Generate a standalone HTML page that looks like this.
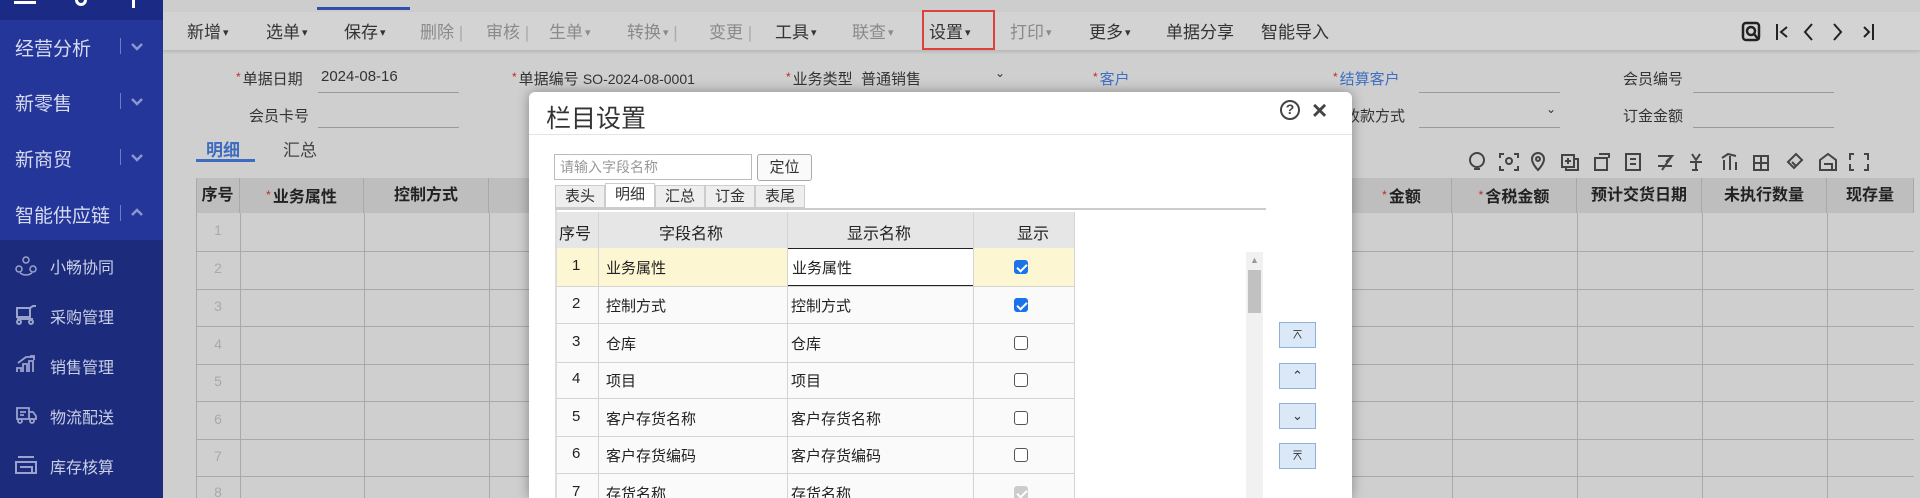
<!DOCTYPE html>
<html><head><meta charset="utf-8"><style>
*{margin:0;padding:0;box-sizing:border-box}
html{width:1920px;height:498px;overflow:hidden}
body{width:1920px;height:498px;overflow:hidden;position:relative;background:#cfcfcf;font-family:"Liberation Sans","Noto Sans CJK SC",sans-serif;color:#333}
.a{position:absolute;white-space:nowrap}
#sb{position:absolute;left:0;top:0;width:163px;height:498px;background:#25369a}
.sbm{position:absolute;left:15px;font-size:19px;color:#d6dbf0}
.sbc{position:absolute;left:120px;width:1px;height:16px;background:#6f7cc0}
.sub{position:absolute;left:50px;font-size:16px;color:#c9cfe6}
.tb{position:absolute;top:18px;font-size:17px;color:#333}
.dis{color:#8a8a8a}
.chev{font-size:11px;margin-left:2px;vertical-align:2px}
.lbl{position:absolute;font-size:15px;color:#333}
.req{color:#c0282a;font-size:12px;vertical-align:3px;margin-right:2px}
.blue{color:#3f6fc4}
.ul{position:absolute;height:1px;background:#9a9a9a}
.th{position:absolute;top:178px;height:35px;background:#bebebe;border-right:1px solid #a8a8a8;font-weight:bold;font-size:16px;line-height:35px;text-align:center;color:#222}
.hl{position:absolute;height:1px;background:#a9a9a9}
.vl{position:absolute;width:1px;background:#a9a9a9}
.rn{position:absolute;left:196px;width:44px;text-align:center;color:#a9a9a9;font-size:14px}
#dlg{position:absolute;left:529px;top:92px;width:823px;height:406px;overflow:hidden;background:#fff;border-radius:6px 6px 0 0;box-shadow:0 0 12px rgba(0,0,0,.35)}
.gc{position:absolute;font-size:15px;color:#222}
.cb{position:absolute;width:14px;height:14px;border:1px solid #555;border-radius:3px;background:#fff}
.cbon{background:#1a73e8;border-color:#1a73e8}
.cbon:after{content:"";position:absolute;left:4px;top:1px;width:4px;height:8px;border:solid #fff;border-width:0 2px 2px 0;transform:rotate(45deg)}
.mb{position:absolute;left:750px;width:37px;height:26px;background:#dbe8f7;border:1px solid #8fb0d8;font-size:13px;text-align:center;line-height:24px;color:#333}
.tab{position:absolute;top:93px;height:23px;border:1px solid #ccc;background:#eee;font-size:15px;text-align:center;line-height:21px}
</style></head><body>
<!-- sidebar -->
<div id="sb">
<div style="position:absolute;left:0;top:0;width:163px;height:20px;background:#1b2a85"></div>
<div class="a" style="left:14px;top:1px;width:22px;height:3px;background:#fff"></div>
<div class="a" style="left:75px;top:-6px;width:12px;height:12px;border:3px solid #fff;border-radius:50%"></div>
<div class="a" style="left:132px;top:0;width:3px;height:8px;background:#fff"></div>
<div class="sbm" style="top:34px">经营分析</div><div class="sbc" style="top:38px"></div>
<div class="sbm" style="top:89px">新零售</div><div class="sbc" style="top:93px"></div>
<div class="sbm" style="top:145px">新商贸</div><div class="sbc" style="top:149px"></div>
<div class="sbm" style="top:201px">智能供应链</div><div class="sbc" style="top:205px"></div>
<svg class="a" style="left:130px;top:40px" width="14" height="180" viewBox="0 0 14 180" fill="none" stroke="#8a96d0" stroke-width="2.5"><path d="M2 4l5 5 5-5M2 59l5 5 5-5M2 115l5 5 5-5M2 175l5-5 5 5"/></svg>
<div style="position:absolute;left:0;top:240px;width:163px;height:258px;background:#1d2b7c"></div>
<svg class="a" style="left:15px;top:256px" width="22" height="20" viewBox="0 0 22 20" fill="none" stroke="#9aa3cc" stroke-width="1.5"><circle cx="11" cy="4" r="3"/><circle cx="4" cy="13" r="3"/><circle cx="18" cy="13" r="3"/><path d="M5 17q6 4 12 0"/></svg>
<div class="sub" style="top:254px">小畅协同</div>
<svg class="a" style="left:15px;top:305px" width="22" height="20" viewBox="0 0 22 20" fill="none" stroke="#9aa3cc" stroke-width="2"><path d="M2 3h13v9H2zM15 3l3-2h3M2 14h16"/><circle cx="4" cy="17" r="2"/><circle cx="16" cy="17" r="2"/></svg>
<div class="sub" style="top:304px">采购管理</div>
<svg class="a" style="left:15px;top:354px" width="22" height="20" viewBox="0 0 22 20" fill="none" stroke="#9aa3cc" stroke-width="1.8"><path d="M2 18v-4h4v4M8 18V10h4v8M14 18V7h4v11M3 9l8-6 8 0M15 2h4v4"/></svg>
<div class="sub" style="top:354px">销售管理</div>
<svg class="a" style="left:15px;top:405px" width="22" height="20" viewBox="0 0 22 20" fill="none" stroke="#9aa3cc" stroke-width="1.8"><path d="M2 3h12v11H2zM14 7h4l3 4v3h-7M5 7h6M5 10h4"/><circle cx="5" cy="16" r="2"/><circle cx="17" cy="16" r="2"/></svg>
<div class="sub" style="top:404px">物流配送</div>
<svg class="a" style="left:15px;top:455px" width="22" height="20" viewBox="0 0 22 20" fill="none" stroke="#9aa3cc" stroke-width="2"><path d="M3 2h16M1 7h20v11H1zM5 12h12v6"/></svg>
<div class="sub" style="top:454px">库存核算</div>
</div>
<!-- top strip -->
<div class="a" style="left:163px;top:0;width:1757px;height:12px;background:#cdcdcd"></div>
<div class="a" style="left:317px;top:7px;width:93px;height:3px;background:#2f4fa8"></div>
<!-- toolbar -->
<div class="a" style="left:163px;top:12px;width:1757px;height:38px;background:#d3d3d3;box-shadow:0 2px 3px rgba(0,0,0,.12)"></div>
<div class="tb" style="left:187px">新增<span class="chev">▾</span></div>
<div class="tb" style="left:266px">选单<span class="chev">▾</span></div>
<div class="tb" style="left:344px">保存<span class="chev">▾</span></div>
<div class="tb dis" style="left:420px">删除 <span style="color:#aaa">|</span></div>
<div class="tb dis" style="left:486px">审核 <span style="color:#aaa">|</span></div>
<div class="tb dis" style="left:549px">生单<span class="chev">▾</span></div>
<div class="tb dis" style="left:627px">转换<span class="chev">▾</span> <span style="color:#aaa">|</span></div>
<div class="tb dis" style="left:709px">变更 <span style="color:#aaa">|</span></div>
<div class="tb" style="left:775px">工具<span class="chev">▾</span></div>
<div class="tb dis" style="left:852px">联查<span class="chev">▾</span></div>
<div class="tb" style="left:929px">设置<span class="chev">▾</span></div>
<div class="a" style="left:922px;top:10px;width:73px;height:40px;border:2px solid #e0403c"></div>
<div class="tb dis" style="left:1010px">打印<span class="chev">▾</span></div>
<div class="tb" style="left:1089px">更多<span class="chev">▾</span></div>
<div class="tb" style="left:1166px">单据分享</div>
<div class="tb" style="left:1261px">智能导入</div>
<svg class="a" style="left:1740px;top:20px" width="150" height="24" viewBox="0 0 150 24" fill="none" stroke="#222" stroke-width="2.5"><rect x="3" y="3" width="16" height="17" rx="3"/><circle cx="11" cy="11" r="4"/><path d="M14 14l5 6"/><path d="M37 4v16M47 7l-6 5 6 5" stroke-width="2"/><path d="M72 4l-7 8 7 8" stroke-width="2"/><path d="M94 4l7 8-7 8" stroke-width="2"/><path d="M124 7l5 5-5 5M133 4v16" stroke-width="2"/></svg>
<!-- form -->
<div class="lbl" style="left:236px;top:68px"><span class="req">*</span>单据日期</div>
<div class="lbl" style="left:321px;top:68px">2024-08-16</div>
<div class="ul" style="left:318px;top:92px;width:141px"></div>
<div class="lbl" style="left:249px;top:105px">会员卡号</div>
<div class="ul" style="left:318px;top:127px;width:141px"></div>
<div class="lbl" style="left:512px;top:68px"><span class="req">*</span>单据编号 <span style="font-size:14px">SO-2024-08-0001</span></div>
<div class="ul" style="left:596px;top:92px;width:141px"></div>
<div class="lbl" style="left:786px;top:68px"><span class="req">*</span>业务类型&nbsp; 普通销售</div>
<div class="lbl" style="left:995px;top:66px;font-size:12px">⌄</div>
<div class="lbl blue" style="left:1093px;top:68px"><span class="req">*</span>客户</div>
<div class="lbl blue" style="left:1333px;top:68px"><span class="req">*</span>结算客户</div>
<div class="ul" style="left:1419px;top:92px;width:141px"></div>
<div class="lbl" style="left:1345px;top:105px">收款方式</div>
<div class="lbl" style="left:1546px;top:102px;font-size:12px">⌄</div>
<div class="ul" style="left:1419px;top:127px;width:141px"></div>
<div class="lbl" style="left:1623px;top:68px">会员编号</div>
<div class="ul" style="left:1693px;top:92px;width:141px"></div>
<div class="lbl" style="left:1623px;top:105px">订金金额</div>
<div class="ul" style="left:1693px;top:127px;width:141px"></div>
<div class="a" style="left:206px;top:136px;font-size:17px;color:#3d6cc0;font-weight:bold">明细</div>
<div class="a" style="left:283px;top:136px;font-size:17px;color:#444">汇总</div>
<div class="a" style="left:196px;top:159px;width:59px;height:3px;background:#3d6cc0"></div>
<svg class="a" style="left:1466px;top:150px" width="430" height="24" viewBox="0 0 430 24" fill="none" stroke="#444" stroke-width="2">
<circle cx="11" cy="10" r="7"/><path d="M8 19h6"/>
<path d="M38 4h-4v4M48 4h4v4M38 20h-4v-4M48 20h4v-4"/><circle cx="43" cy="11" r="3"/>
<path d="M72 20s-6-6-6-11a6 6 0 0 1 12 0c0 5-6 11-6 11z"/><circle cx="72" cy="9" r="2"/>
<rect x="96" y="5" width="12" height="12"/><path d="M102 8v6M99 11h6M100 17v3h12V9h-4"/>
<rect x="129" y="8" width="12" height="12"/><path d="M133 4h10v4"/>
<rect x="160" y="4" width="14" height="16"/><path d="M164 9h6M164 14h6"/>
<path d="M192 6h14l-6 6M192 16h14M196 20l10-14"/>
<path d="M226 4l4 6 4-6M224 12h12M230 12v8M226 20h6"/>
<path d="M258 20V10M264 20V6M270 20v-8M256 8l6-4 8 2"/>
<rect x="288" y="6" width="14" height="14"/><path d="M295 6v14M288 13h14"/>
<path d="M322 12l8-8 6 6-8 8zM326 12l4 4"/>
<path d="M354 10l8-6 8 6v10h-16zM358 14h8v6"/>
<path d="M388 4h-4v6M398 4h4v6M388 20h-4v-6M398 20h4v-6"/>
</svg>
<!-- table -->
<div class="th" style="left:196px;width:44px">序号</div>
<div class="th" style="left:240px;width:124px"><span class="req" style="font-weight:normal">*</span>业务属性</div>
<div class="th" style="left:364px;width:125px">控制方式</div>
<div class="th" style="left:489px;width:900px"></div>
<div class="th" style="left:1352px;width:100px"><span class="req" style="font-weight:normal">*</span>金额</div>
<div class="th" style="left:1452px;width:125px"><span class="req" style="font-weight:normal">*</span>含税金额</div>
<div class="th" style="left:1577px;width:125px">预计交货日期</div>
<div class="th" style="left:1702px;width:125px">未执行数量</div>
<div class="th" style="left:1827px;width:87px">现存量</div>
<div class="vl" style="left:196px;top:178px;height:320px"></div>
<div class="vl" style="left:240px;top:213px;height:285px"></div>
<div class="vl" style="left:364px;top:213px;height:285px"></div>
<div class="vl" style="left:489px;top:213px;height:285px"></div>
<div class="vl" style="left:1452px;top:213px;height:285px"></div>
<div class="vl" style="left:1577px;top:213px;height:285px"></div>
<div class="vl" style="left:1702px;top:213px;height:285px"></div>
<div class="vl" style="left:1827px;top:213px;height:285px"></div>
<div class="hl" style="left:196px;top:251px;width:1718px"></div>
<div class="hl" style="left:196px;top:289px;width:1718px"></div>
<div class="hl" style="left:196px;top:326px;width:1718px"></div>
<div class="hl" style="left:196px;top:364px;width:1718px"></div>
<div class="hl" style="left:196px;top:401px;width:1718px"></div>
<div class="hl" style="left:196px;top:439px;width:1718px"></div>
<div class="hl" style="left:196px;top:476px;width:1718px"></div>
<div class="rn" style="top:222px">1</div><div class="rn" style="top:260px">2</div><div class="rn" style="top:298px">3</div><div class="rn" style="top:336px">4</div><div class="rn" style="top:373px">5</div><div class="rn" style="top:411px">6</div><div class="rn" style="top:448px">7</div><div class="rn" style="top:484px">8</div>
<!-- dialog -->
<div id="dlg">
<div class="a" style="left:17px;top:7px;font-size:25px;color:#333">栏目设置</div>
<div class="a" style="left:751px;top:8px;width:20px;height:20px;border:2.5px solid #444;border-radius:50%;font-size:14px;font-weight:bold;line-height:15px;text-align:center;color:#444">?</div>
<div class="a" style="left:783px;top:3px;font-size:26px;color:#444;font-weight:bold">×</div>
<div class="a" style="left:0;top:42px;width:823px;height:1px;background:#e4e4e4"></div>
<div class="a" style="left:25px;top:62px;width:198px;height:26px;border:1px solid #bbb;font-size:14px;color:#999;line-height:24px;padding-left:5px">请输入字段名称</div>
<div class="a" style="left:228px;top:62px;width:55px;height:27px;border:1px solid #aaa;border-radius:3px;font-size:15px;text-align:center;line-height:25px;background:#fafafa">定位</div>
<div class="tab" style="left:26px;width:50px">表头</div>
<div class="tab" style="left:76px;width:50px;background:#fff;height:25px;top:91px">明细</div>
<div class="tab" style="left:126px;width:50px">汇总</div>
<div class="tab" style="left:176px;width:50px">订金</div>
<div class="tab" style="left:226px;width:50px">表尾</div>
<div class="a" style="left:26px;top:116px;width:711px;height:2px;background:#ccc"></div>
<div class="a" style="left:26px;top:118px;width:2px;height:320px;background:#ddd"></div>
<!-- grid -->
<div class="a" style="left:28px;top:120px;width:517px;height:36px;background:#e6e6e6"></div>
<div class="gc" style="left:30px;top:128px;font-size:16px">序号</div>
<div class="gc" style="left:130px;top:128px;font-size:16px">字段名称</div>
<div class="gc" style="left:318px;top:128px;font-size:16px">显示名称</div>
<div class="gc" style="left:488px;top:128px;font-size:16px">显示</div>
<div class="a" style="left:28px;top:156px;width:517px;height:38px;background:#fdf6d3"></div>
<div class="a" style="left:28px;top:194px;width:517px;height:300px;background:#fafafa"></div>
<div class="a" style="left:258px;top:156px;width:187px;height:38px;border:1px solid #222;background:#fff"></div>
<div class="vl" style="left:69px;top:120px;height:300px;background:#d4d4d4"></div>
<div class="vl" style="left:258px;top:120px;height:300px;background:#d4d4d4"></div>
<div class="vl" style="left:444px;top:120px;height:300px;background:#d4d4d4"></div>
<div class="vl" style="left:545px;top:120px;height:300px;background:#d4d4d4"></div>
<div class="hl" style="left:28px;top:194px;width:517px;background:#d4d4d4"></div>
<div class="hl" style="left:28px;top:231px;width:517px;background:#d4d4d4"></div>
<div class="hl" style="left:28px;top:270px;width:517px;background:#d4d4d4"></div>
<div class="hl" style="left:28px;top:306px;width:517px;background:#d4d4d4"></div>
<div class="hl" style="left:28px;top:344px;width:517px;background:#d4d4d4"></div>
<div class="hl" style="left:28px;top:381px;width:517px;background:#d4d4d4"></div>
<div class="gc" style="left:43px;top:165px">1</div><div class="gc" style="left:77px;top:165px">业务属性</div><div class="gc" style="left:263px;top:165px">业务属性</div>
<div class="gc" style="left:43px;top:203px">2</div><div class="gc" style="left:77px;top:203px">控制方式</div><div class="gc" style="left:262px;top:203px">控制方式</div>
<div class="gc" style="left:43px;top:241px">3</div><div class="gc" style="left:77px;top:241px">仓库</div><div class="gc" style="left:262px;top:241px">仓库</div>
<div class="gc" style="left:43px;top:278px">4</div><div class="gc" style="left:77px;top:278px">项目</div><div class="gc" style="left:262px;top:278px">项目</div>
<div class="gc" style="left:43px;top:316px">5</div><div class="gc" style="left:77px;top:316px">客户存货名称</div><div class="gc" style="left:262px;top:316px">客户存货名称</div>
<div class="gc" style="left:43px;top:353px">6</div><div class="gc" style="left:77px;top:353px">客户存货编码</div><div class="gc" style="left:262px;top:353px">客户存货编码</div>
<div class="gc" style="left:43px;top:391px">7</div><div class="gc" style="left:77px;top:391px">存货名称</div><div class="gc" style="left:262px;top:391px">存货名称</div>
<div class="cb cbon" style="left:485px;top:168px"></div>
<div class="cb cbon" style="left:485px;top:206px"></div>
<div class="cb" style="left:485px;top:244px"></div>
<div class="cb" style="left:485px;top:281px"></div>
<div class="cb" style="left:485px;top:319px"></div>
<div class="cb" style="left:485px;top:356px"></div>
<div class="cb cbon" style="left:485px;top:394px;background:#ccc;border-color:#ccc"></div>
<!-- scrollbar -->
<div class="a" style="left:717px;top:160px;width:17px;height:260px;background:#f1f1f1"></div>
<div class="a" style="left:721px;top:163px;font-size:9px;color:#999">▲</div>
<div class="a" style="left:719px;top:178px;width:13px;height:43px;background:#c1c1c1"></div>
<div class="mb" style="top:230px">⌅</div>
<div class="mb" style="top:271px">⌃</div>
<div class="mb" style="top:311px">⌄</div>
<div class="mb" style="top:351px">⌆</div>
</div>
</body></html>
